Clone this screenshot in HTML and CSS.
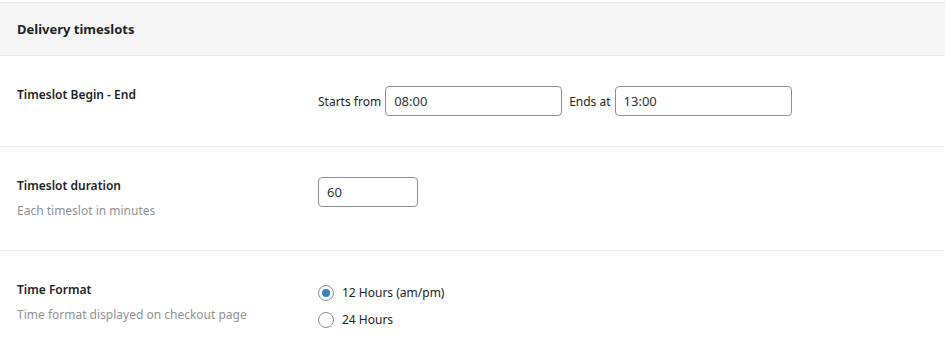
FILE: index.html
```html
<!DOCTYPE html>
<html>
<head>
<meta charset="utf-8">
<link rel="stylesheet" href="styles.css">
</head>
<body>
<div class="card">
  <div class="card-header">Delivery timeslots</div>
  <div class="row">
    <div class="label-col">
      <div class="label">Timeslot Begin - End</div>
    </div>
    <div class="field-col">
      <div class="inline-fields">
        <span class="prefix">Starts from</span>
        <input class="text-input wide" type="text" value="08:00">
        <span class="prefix ends">Ends at</span>
        <input class="text-input wide" type="text" value="13:00">
      </div>
    </div>
  </div>
  <div class="row">
    <div class="label-col">
      <div class="label">Timeslot duration</div>
      <div class="desc">Each timeslot in minutes</div>
    </div>
    <div class="field-col">
      <input class="text-input narrow" type="text" value="60">
    </div>
  </div>
  <div class="row last">
    <div class="label-col">
      <div class="label">Time Format</div>
      <div class="desc">Time format displayed on checkout page</div>
    </div>
    <div class="field-col">
      <div class="radio-list">
        <label class="radio-option"><span class="radio checked"></span><span>12 Hours (am/pm)</span></label>
        <label class="radio-option"><span class="radio"></span><span>24 Hours</span></label>
      </div>
    </div>
  </div>
</div>
</body>
</html>
```
FILE: styles.css
```css
* { box-sizing: border-box; }
html, body { margin: 0; padding: 0; background: #ffffff; }
body {
  font-family: "Noto Sans", "Open Sans", sans-serif;
  font-size: 13px;
  color: #1d2327;
  padding-top: 2px;
}
.card {
  border-top: 1px solid #e8e8e8;
  margin-right: 1px;
}
.card-header {
  background: #f6f6f6;
  height: 53px;
  border-bottom: 1px solid #e8e8e8;
  padding: 0 17px;
  display: flex;
  align-items: center;
  font-weight: 700;
  font-size: 13px;
  padding-bottom: 1px;
}
.row {
  display: grid;
  grid-template-columns: 318px 1fr;
  padding: 29px 0;
  border-bottom: 1px solid #ebebeb;
}
.row.last { border-bottom: none; }
.label-col { padding-left: 17px; }
.label {
  font-weight: 600;
  line-height: 20px;
  font-size: 12px;
}
.desc {
  margin-top: 5px;
  line-height: 20px;
  color: #8f9296;
  font-size: 12px;
}
.field-col { min-height: 32px; }
.inline-fields {
  display: flex;
  align-items: center;
  margin-top: 1px;
}
.prefix {
  font-size: 12px;
  margin-right: 4px;
}
.prefix.ends { margin-left: 7px; }
.text-input {
  height: 30px;
  border: 1px solid #8c8f94;
  border-radius: 4px;
  padding: 0 8px;
  font-family: inherit;
  font-size: 13px;
  color: #2c3338;
  background: #fff;
  margin: 0;
  outline: none;
}
.wide { width: 177px; }
.narrow { width: 100px; margin-top: 1px; }
.radio-list {
  display: flex;
  flex-direction: column;
  gap: 2px;
}
.radio-option {
  display: flex;
  align-items: center;
  height: 25px;
  gap: 8px;
  font-size: 12px;
}
.radio {
  width: 16px;
  height: 16px;
  border: 1px solid #8c8f94;
  border-radius: 50%;
  background: #fff;
  display: flex;
  align-items: center;
  justify-content: center;
  flex: none;
}
.radio.checked::after {
  content: "";
  width: 8px;
  height: 8px;
  border-radius: 50%;
  background: #3582c4;
}
```
